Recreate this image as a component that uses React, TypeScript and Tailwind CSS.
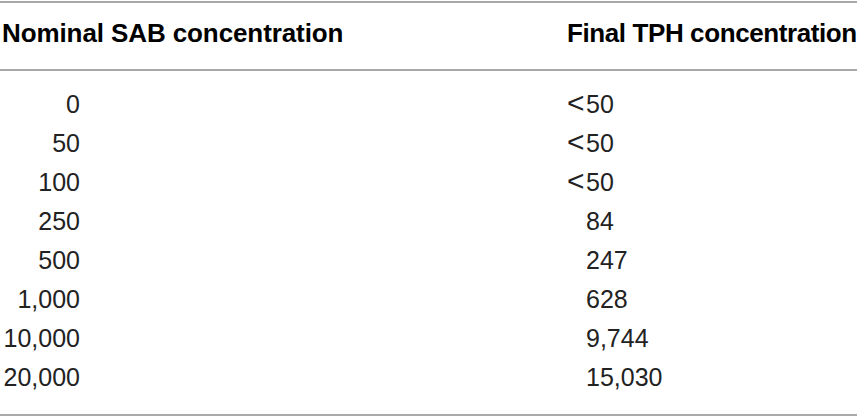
import React from "react";

interface Row {
  nominal: string;
  prefix?: string;
  final: string;
}

const rows: Row[] = [
  { nominal: "0", prefix: "<", final: "50" },
  { nominal: "50", prefix: "<", final: "50" },
  { nominal: "100", prefix: "<", final: "50" },
  { nominal: "250", final: "84" },
  { nominal: "500", final: "247" },
  { nominal: "1,000", final: "628" },
  { nominal: "10,000", final: "9,744" },
  { nominal: "20,000", final: "15,030" },
];

const App: React.FC = () => {
  return (
    <div
      className="w-[857px] h-[416px] bg-white overflow-hidden pt-px"
      style={{ fontFamily: '"Liberation Sans", Arial, sans-serif' }}
    >
      <div className="border-t-2 border-b-2 border-[#a9a9a9]">
        <div className="flex h-[66px] items-start pt-[17px] text-[26px] leading-[26px] font-bold text-black">
          <div className="w-[567px] pl-[2px] tracking-[-0.1px]">Nominal SAB concentration</div>
          <div className="flex-1 tracking-[-0.4px] whitespace-nowrap">Final TPH concentration</div>
        </div>
      </div>

      <div className="pt-[14px] pb-[17px] border-b-2 border-[#a9a9a9] text-[25px] leading-[39px] text-[#222222]">
        {rows.map((row) => (
          <div key={row.nominal} className="flex h-[39px] items-baseline">
            <div className="w-[80px] text-right">{row.nominal}</div>
            <div className="w-[488px]" />
            <div className="flex items-baseline">
              <span className="w-[19px] text-[30px] leading-[35px] -ml-[1px]">{row.prefix}</span>
              <span>{row.final}</span>
            </div>
          </div>
        ))}
      </div>
    </div>
  );
};

export default App;
